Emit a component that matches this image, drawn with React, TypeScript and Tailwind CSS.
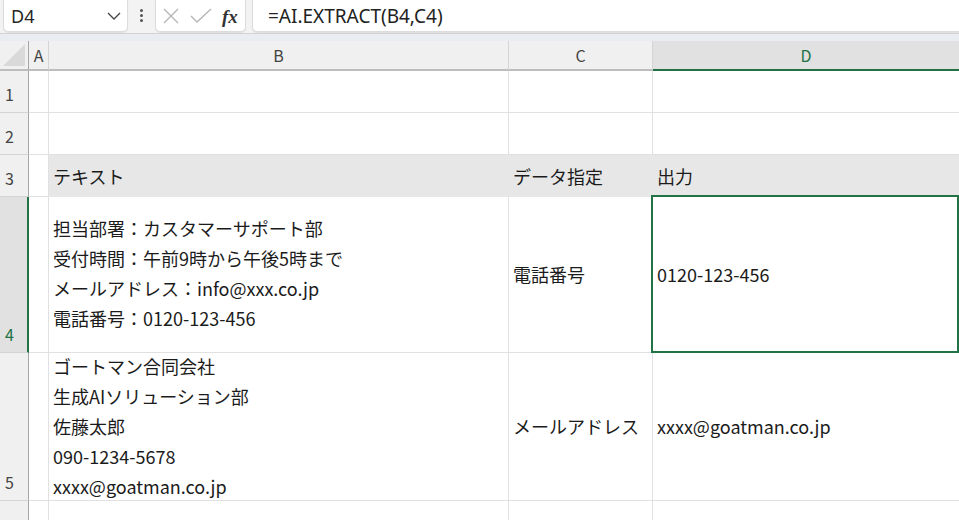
import React from "react";

const JP = { fontFamily: '"Noto Sans CJK JP", "Noto Sans", sans-serif' };

function Toolbar() {
  return (
    <div className="flex h-[33px] items-start bg-[#f3f3f3]">
      <div className="ml-[3px] -mt-[4px] flex h-[36px] w-[125px] items-center justify-between rounded-[5px] border border-[#dcdcdc] bg-white pl-[7px] pr-[5px] pt-[4px] shadow-[0_1px_1px_rgba(0,0,0,0.08)]">
        <span className="text-[18px] text-[#262626]" style={{ fontFamily: '"Noto Sans", sans-serif' }}>D4</span>
        <svg width="14" height="8" viewBox="0 0 14 8" className="mr-[1px]">
          <path d="M1 1 L7 7 L13 1" fill="none" stroke="#444" strokeWidth="1.3" />
        </svg>
      </div>
      <div className="flex w-[27px] flex-col items-center gap-[2px] pt-[9px]">
        <span className="h-[3px] w-[3px] rounded-full bg-[#555]" />
        <span className="h-[3px] w-[3px] rounded-full bg-[#555]" />
        <span className="h-[3px] w-[3px] rounded-full bg-[#555]" />
      </div>
      <div className="-mt-[4px] flex h-[36px] w-[91px] items-center rounded-[5px] border border-[#dcdcdc] bg-white pt-[4px] shadow-[0_1px_1px_rgba(0,0,0,0.08)]">
        <svg width="18" height="16" viewBox="0 0 18 16" className="ml-[6px]">
          <path d="M2 1 L16 15 M16 1 L2 15" fill="none" stroke="#b4b4b4" strokeWidth="1.3" />
        </svg>
        <svg width="22" height="16" viewBox="0 0 22 16" className="ml-[10px]">
          <path d="M1 8 L7 14 L21 1" fill="none" stroke="#b4b4b4" strokeWidth="1.3" />
        </svg>
        <span
          className="ml-[10px] text-[19px] font-bold italic leading-none text-[#333]"
          style={{ fontFamily: '"Liberation Serif", serif' }}
        >
          fx
        </span>
      </div>
      <div className="-mt-[4px] ml-[6px] flex h-[36px] flex-1 items-center rounded-l-[5px] border border-r-0 border-[#dcdcdc] bg-white pl-[15px] pt-[4px] shadow-[0_1px_1px_rgba(0,0,0,0.08)]">
        <span className="text-[19px] text-[#222]" style={{ fontFamily: '"Noto Sans", sans-serif' }}>
          =AI.EXTRACT(B4,C4)
        </span>
      </div>
    </div>
  );
}

const cellBorder = "border-r border-b border-[#e1e1e1]";

function RowHeader({ n, h, selected }: { n?: number; h: string; selected?: boolean }) {
  return (
    <div
      className={`${h} flex w-[29px] shrink-0 items-end pb-[6px] pl-[5px] text-[16px] border-b ${
        selected
          ? "bg-[#e1e1e1] border-r-2 border-r-[#217346] border-b-[#d4d4d4] text-[#217346]"
          : "bg-[#f0f0f0] border-r border-r-[#a6a6a6] border-b-[#d4d4d4] text-[#444]"
      }`}
    >
      {n}
    </div>
  );
}

function Lines({ lines }: { lines: string[] }) {
  return (
    <div className="flex flex-col">
      {lines.map((l, i) => (
        <div key={i} className="h-[30px] leading-[30px] whitespace-nowrap">
          {l}
        </div>
      ))}
    </div>
  );
}

export default function App() {
  return (
    <div className="h-[520px] w-[959px] overflow-hidden bg-white text-[#1b1b1b]" style={JP}>
      <Toolbar />
      <div className="h-[8px] border-t border-[#d2d2d2] bg-[#e9edf1]" />
      {/* column headers */}
      <div className="flex h-[30px] text-[16px] text-[#444]">
        <div className="relative w-[29px] shrink-0 border-r border-b-2 border-r-[#a6a6a6] border-b-[#bdbdbd] bg-[#f0f0f0]">
          <svg width="22" height="22" viewBox="0 0 22 22" className="absolute bottom-[3px] right-[3px]">
            <path d="M22 0 L22 22 L0 22 Z" fill="#d9d9d9" />
          </svg>
        </div>
        <div className="flex w-[20px] shrink-0 items-center justify-center border-r border-b-2 border-r-[#d4d4d4] border-b-[#bdbdbd] bg-[#f0f0f0]">A</div>
        <div className="flex w-[460px] shrink-0 items-center justify-center border-r border-b-2 border-r-[#d4d4d4] border-b-[#bdbdbd] bg-[#f0f0f0]">B</div>
        <div className="flex w-[144px] shrink-0 items-center justify-center border-r border-b-2 border-r-[#d4d4d4] border-b-[#bdbdbd] bg-[#f0f0f0]">C</div>
        <div className="flex flex-1 items-center justify-center border-b-2 border-b-[#217346] bg-[#e1e1e1] text-[#217346]">D</div>
      </div>

      {/* row 1 */}
      <div className="flex">
        <RowHeader n={1} h="h-[42px]" />
        <div className={`h-[42px] w-[20px] shrink-0 ${cellBorder}`} />
        <div className={`h-[42px] w-[460px] shrink-0 ${cellBorder}`} />
        <div className={`h-[42px] w-[144px] shrink-0 ${cellBorder}`} />
        <div className="h-[42px] flex-1 border-b border-[#e1e1e1]" />
      </div>
      {/* row 2 */}
      <div className="flex">
        <RowHeader n={2} h="h-[42px]" />
        <div className={`h-[42px] w-[20px] shrink-0 ${cellBorder}`} />
        <div className={`h-[42px] w-[460px] shrink-0 ${cellBorder}`} />
        <div className={`h-[42px] w-[144px] shrink-0 ${cellBorder}`} />
        <div className="h-[42px] flex-1 border-b border-[#e1e1e1]" />
      </div>
      {/* row 3 */}
      <div className="flex text-[18px]">
        <RowHeader n={3} h="h-[42px]" />
        <div className={`h-[42px] w-[20px] shrink-0 ${cellBorder}`} />
        <div className="flex h-[42px] w-[604px] shrink-0 items-center bg-[#e7e7e7]">
          <div className="w-[460px] pl-[4px]">テキスト</div>
          <div className="w-[144px] pl-[4px]">データ指定</div>
        </div>
        <div className="flex h-[42px] flex-1 items-center bg-[#e7e7e7] pl-[4px]">出力</div>
      </div>
      {/* row 4 */}
      <div className="flex text-[18px]">
        <RowHeader n={4} h="h-[156px]" selected />
        <div className={`h-[156px] w-[20px] shrink-0 ${cellBorder}`} />
        <div className={`flex h-[156px] w-[460px] shrink-0 items-center pl-[4px] ${cellBorder}`}>
          <div className="-mt-[3px]">
            <Lines
              lines={[
                "担当部署：カスタマーサポート部",
                "受付時間：午前9時から午後5時まで",
                "メールアドレス：info@xxx.co.jp",
                "電話番号：0120-123-456",
              ]}
            />
          </div>
        </div>
        <div className={`flex h-[156px] w-[144px] shrink-0 items-center pl-[4px] ${cellBorder}`}>電話番号</div>
        <div className="relative flex h-[156px] flex-1 items-center border-b border-[#e1e1e1] pl-[4px]">
          0120-123-456
          <div className="pointer-events-none absolute -left-[2px] -top-[2px] bottom-[-1px] right-0 border-2 border-[#217346]" />
        </div>
      </div>
      {/* row 5 */}
      <div className="flex text-[18px]">
        <RowHeader n={5} h="h-[148px]" />
        <div className={`h-[148px] w-[20px] shrink-0 ${cellBorder}`} />
        <div className={`flex h-[148px] w-[460px] shrink-0 items-center overflow-visible pl-[4px] ${cellBorder}`}>
          <div className="-mt-[2px]">
            <Lines
              lines={["ゴートマン合同会社", "生成AIソリューション部", "佐藤太郎", "090-1234-5678", "xxxx@goatman.co.jp"]}
            />
          </div>
        </div>
        <div className={`flex h-[148px] w-[144px] shrink-0 items-center pl-[4px] ${cellBorder}`}>メールアドレス</div>
        <div className="flex h-[148px] flex-1 items-center border-b border-[#e1e1e1] pl-[4px]">xxxx@goatman.co.jp</div>
      </div>
      {/* row 6 */}
      <div className="flex">
        <RowHeader h="h-[42px]" />
        <div className={`h-[42px] w-[20px] shrink-0 ${cellBorder}`} />
        <div className={`h-[42px] w-[460px] shrink-0 ${cellBorder}`} />
        <div className={`h-[42px] w-[144px] shrink-0 ${cellBorder}`} />
        <div className="h-[42px] flex-1 border-b border-[#e1e1e1]" />
      </div>
    </div>
  );
}
